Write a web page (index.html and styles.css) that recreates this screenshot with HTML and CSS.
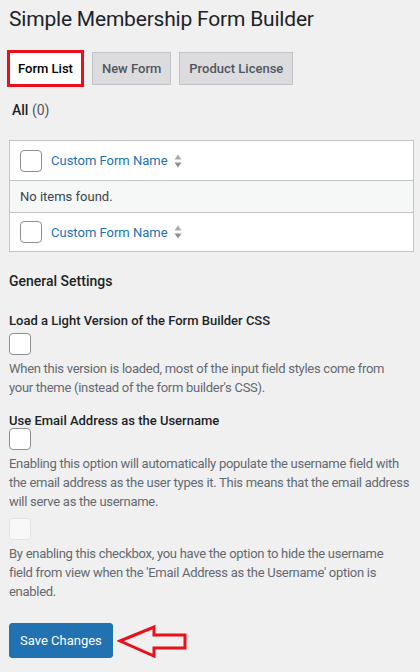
FILE: index.html
```html
<!DOCTYPE html>
<html lang="en">
<head>
<meta charset="utf-8">
<title>Simple Membership Form Builder</title>
<link rel="stylesheet" href="styles.css">
</head>
<body>
<div class="wrap">
  <h1 class="title">Simple Membership Form Builder</h1>
  <nav class="tabs">
    <a class="tab tab-active">Form List</a>
    <a class="tab">New Form</a>
    <a class="tab">Product License</a>
  </nav>
  <div class="subsub"><strong>All</strong> <span class="count">(0)</span></div>

  <div class="list">
    <div class="row row-head">
      <span class="cb"></span>
      <a class="colname">Custom Form Name</a>
      <svg class="sort" width="8" height="14" viewBox="0 0 8 14"><path d="M4 0.5 L7.5 5.5 H0.5 Z" fill="#a7aaad"/><path d="M4 13.5 L7.5 8.5 H0.5 Z" fill="#8c8f94"/></svg>
    </div>
    <div class="row row-empty">No items found.</div>
    <div class="row row-foot">
      <span class="cb"></span>
      <a class="colname">Custom Form Name</a>
      <svg class="sort" width="8" height="14" viewBox="0 0 8 14"><path d="M4 0.5 L7.5 5.5 H0.5 Z" fill="#a7aaad"/><path d="M4 13.5 L7.5 8.5 H0.5 Z" fill="#8c8f94"/></svg>
    </div>
  </div>

  <h2 class="section">General Settings</h2>

  <div class="field">
    <div class="label">Load a Light Version of the Form Builder CSS</div>
    <span class="cb"></span>
    <p class="desc">When this version is loaded, most of the input field styles come from<br>your theme (instead of the form builder's CSS).</p>
  </div>

  <div class="field field-second">
    <div class="label label-tight">Use Email Address as the Username</div>
    <span class="cb"></span>
    <p class="desc">Enabling this option will automatically populate the username field with<br>the email address as the user types it. This means that the email address<br>will serve as the username.</p>
  </div>

  <div class="field field-plain">
    <span class="cb cb-disabled"></span>
    <p class="desc">By enabling this checkbox, you have the option to hide the username<br>field from view when the 'Email Address as the Username' option is<br>enabled.</p>
  </div>

  <div class="actions">
    <button class="btn-primary">Save Changes</button>
    <svg class="arrow" width="72" height="36" viewBox="0 0 72 36"><path d="M3 19 L37 5 L37 13 L68 13 L68 26 L37 26 L37 34 Z" fill="none" stroke="#e8101a" stroke-width="3" stroke-linejoin="miter"/></svg>
  </div>
</div>
</body>
</html>
```
FILE: styles.css
```css
* { box-sizing: border-box; }
html, body { margin: 0; padding: 0; }
body {
  background: #f0f0f1;
  font-family: Roboto, "Noto Sans", sans-serif;
  font-size: 13px;
  color: #3c434a;
}
.wrap { padding: 0 6px 0 9px; }
.title {
  margin: 0;
  padding-top: 5px;
  font-size: 21px;
  font-weight: 400;
  line-height: 28px;
  letter-spacing: -0.2px;
  color: #1d2327;
}
.tabs {
  display: flex;
  align-items: center;
  gap: 8px;
  margin-top: 17px;
  margin-left: -2px;
}
.tab {
  display: block;
  height: 33px;
  line-height: 31px;
  padding: 0 9px;
  border: 1px solid #c3c4c7;
  background: #dcdcde;
  color: #50575e;
  font-weight: 500;
  font-size: 13px;
}
.tab-active {
  height: 37px;
  line-height: 31px;
  padding: 0 8px;
  background: #fff;
  color: #000;
  border: 3px solid #e8101a;
}
.subsub {
  margin-top: 13px;
  padding-left: 3px;
  font-size: 14px;
  line-height: 20px;
  color: #1d2327;
}
.subsub strong { font-weight: 500; }
.count { color: #50575e; }
.list {
  margin-top: 20px;
  width: 405px;
  background: #fff;
  border: 1px solid #c3c4c7;
}
.row {
  display: flex;
  align-items: center;
}
.row-head { height: 40px; border-bottom: 1px solid #c3c4c7; padding-left: 10px; }
.row-empty { height: 32px; background: #f6f7f7; border-bottom: 1px solid #c3c4c7; padding-left: 10px; color: #3c434a; }
.row-foot { height: 38px; padding-left: 10px; }
.cb {
  display: block;
  width: 22px;
  height: 22px;
  border: 1px solid #8c8f94;
  border-radius: 4px;
  background: #fff;
  flex: none;
}
.colname {
  margin-left: 9px;
  color: #2271b1;
  font-size: 13px;
}
.sort { margin-left: 6px; }
.section {
  margin: 19px 0 0;
  font-size: 14px;
  font-weight: 500;
  line-height: 20px;
  color: #1d2327;
}
.field { margin-top: 20px; }
.field-second { margin-top: 14px; }
.field-plain { margin-top: 7px; }
.label {
  font-weight: 500;
  color: #1d2327;
  line-height: 20px;
  margin-bottom: 2px;
}
.label-tight { margin-bottom: -3px; }
.cb-disabled {
  background: rgba(255,255,255,0.5);
  border-color: rgba(220,220,222,0.75);
}
.desc {
  margin: 4px 0 0;
  color: #646970;
  line-height: 19px;
  white-space: nowrap;
  letter-spacing: -0.28px;
}
.actions {
  display: flex;
  align-items: center;
  gap: 4px;
  margin-top: 21px;
}
.btn-primary {
  height: 35px;
  padding: 0 10px;
  background: #2271b1;
  border: 1px solid #2271b1;
  border-radius: 3px;
  color: #fff;
  font-family: inherit;
  font-size: 13px;
  font-weight: 400;
}
.arrow { display: block; }
```
